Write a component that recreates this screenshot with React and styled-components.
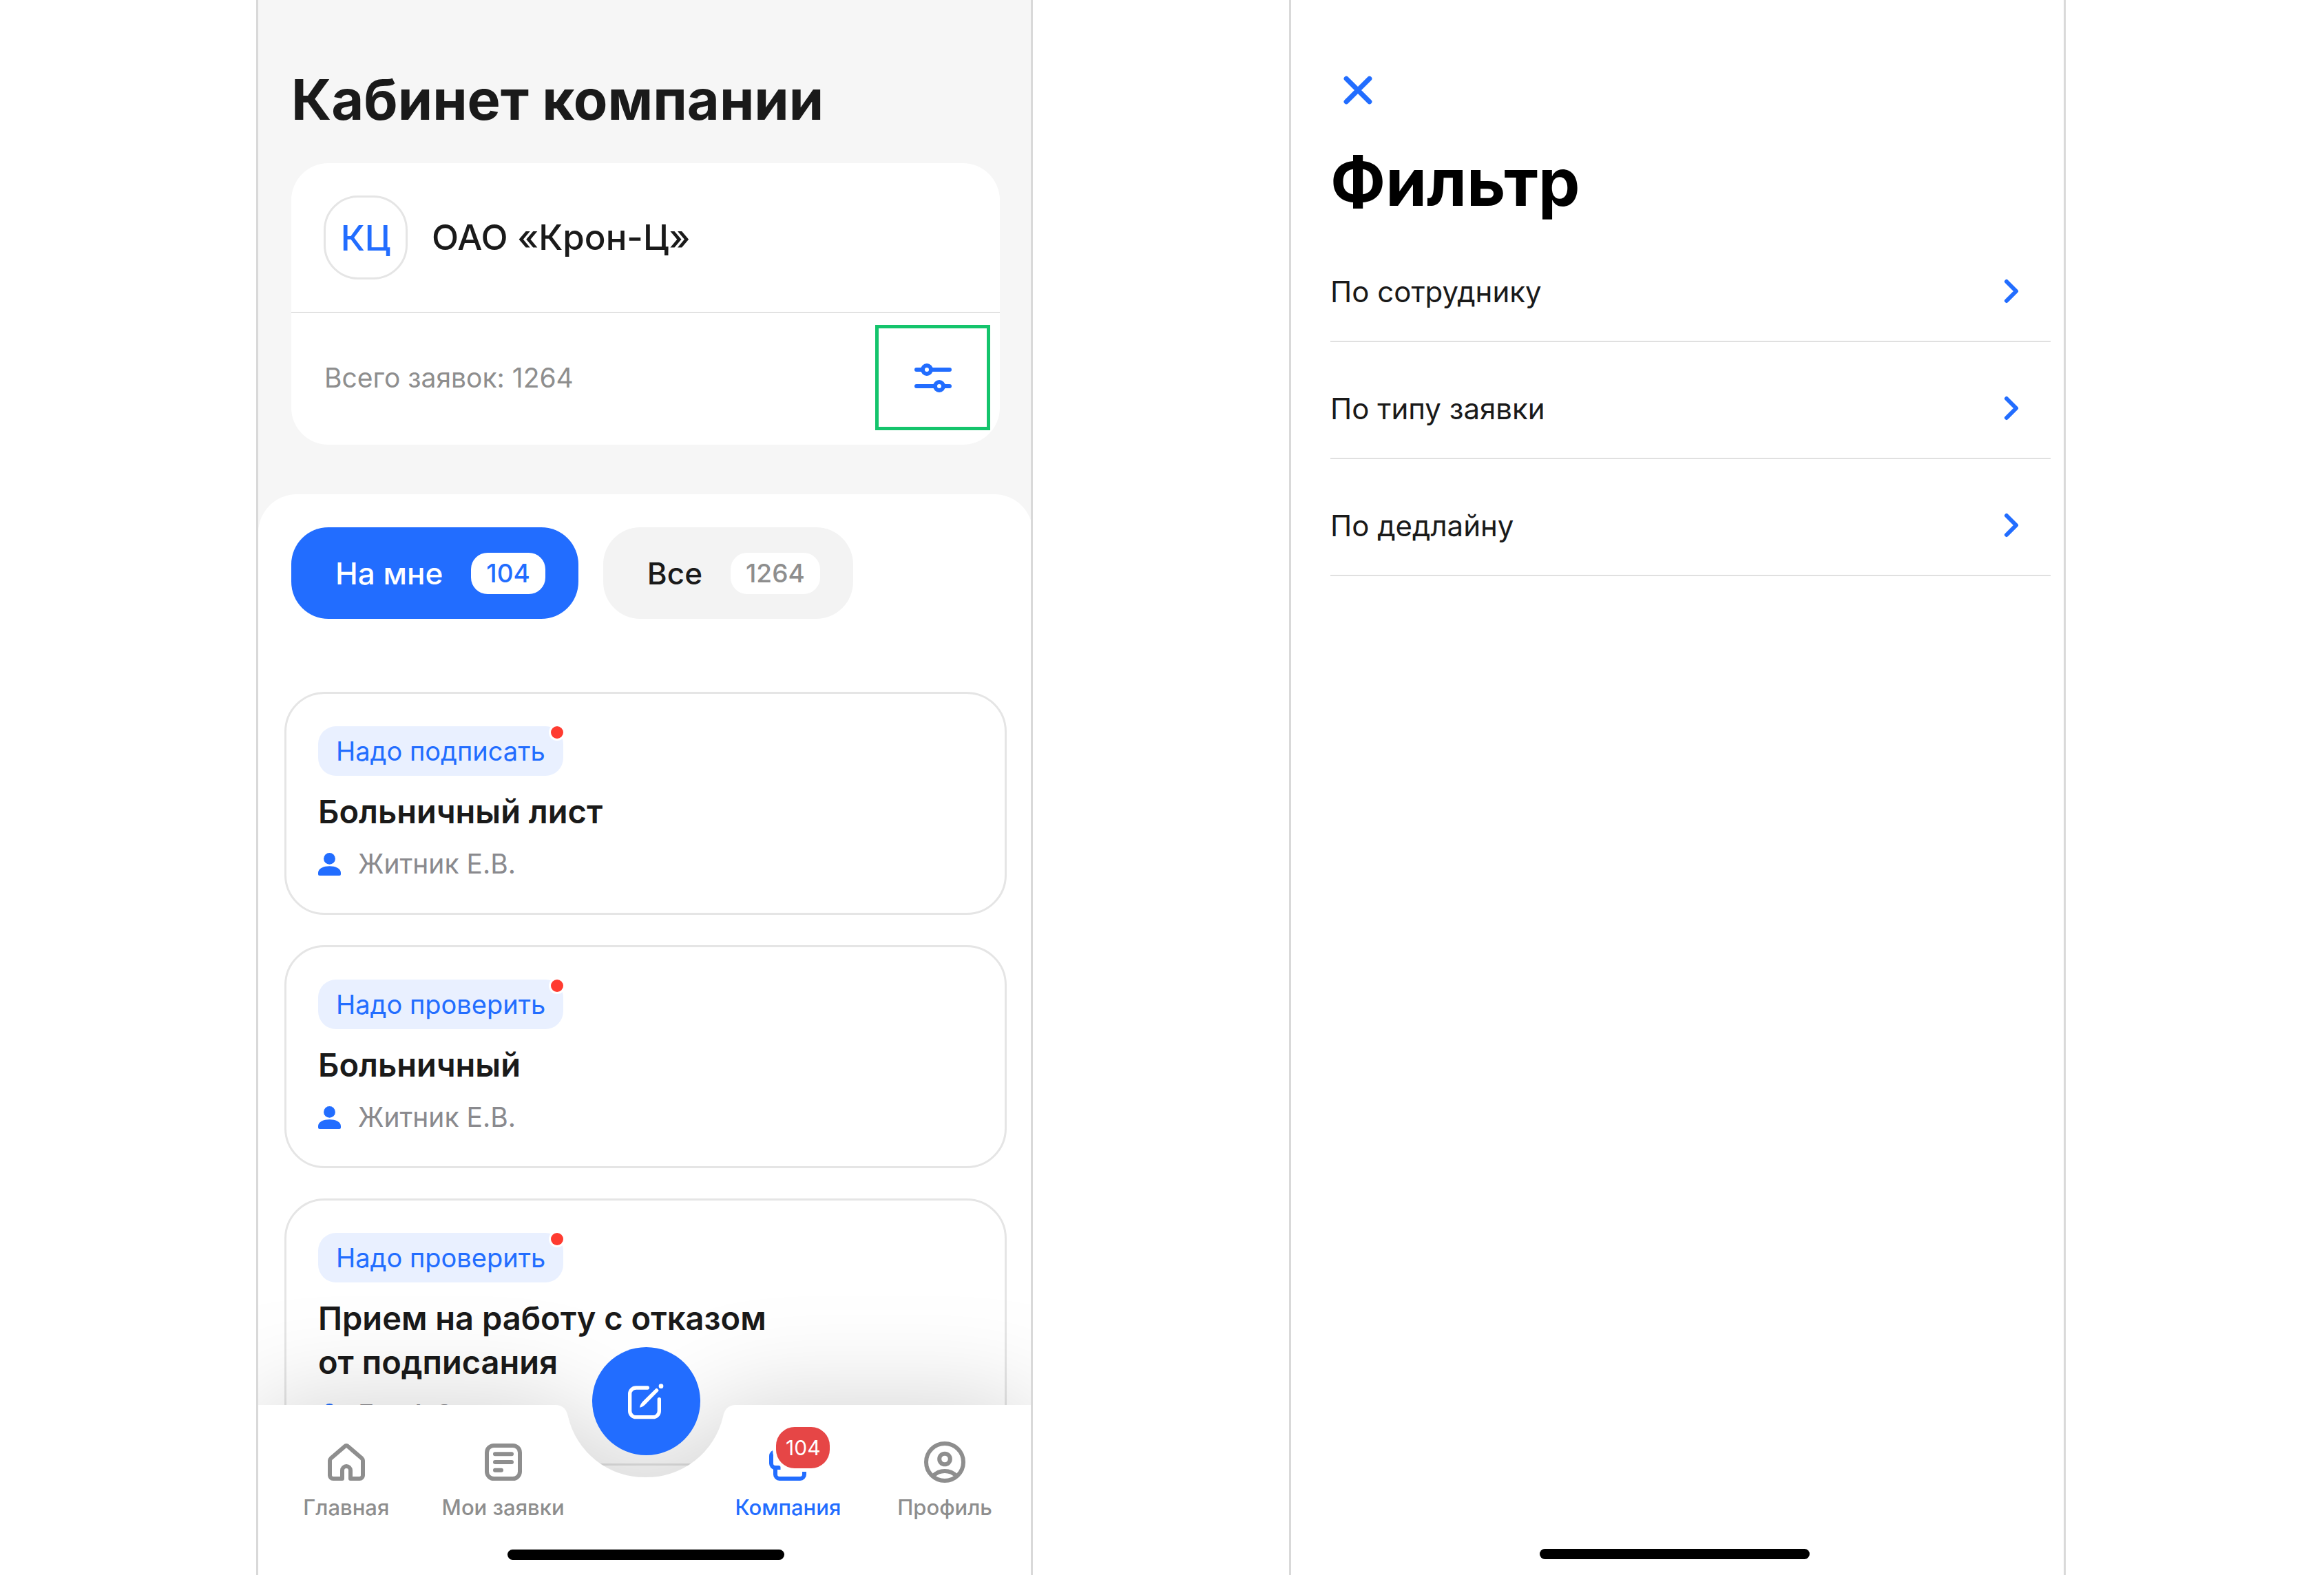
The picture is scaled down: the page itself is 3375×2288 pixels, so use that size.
import React from 'react';
import styled, { createGlobalStyle, css } from 'styled-components';

const color = {
  blue: '#226dff',
  ink: '#1a1a1a',
  gray: '#8e8e8e',
  line: '#e5e5e5',
  frame: '#d9d9d9',
  surface: '#f6f6f6',
};

const GlobalStyle = createGlobalStyle`
  *, *::before, *::after { box-sizing: border-box; }
  body {
    margin: 0;
    background: #fff;
    color: ${color.ink};
    font-family: Inter, "Liberation Sans", sans-serif;
  }
  h1, h2, h3, p, ul { margin: 0; padding: 0; }
  ul { list-style: none; }
  button { font: inherit; color: inherit; border: 0; padding: 0; background: none; cursor: pointer; }
  a { color: inherit; text-decoration: none; }
  svg { display: block; flex: none; }
`;

const Board = styled.main`
  display: flex;
  gap: 372px;
  height: 100vh;
  padding: 0 375px 0 372px;
`;

const Phone = styled.section`
  position: relative;
  flex: 1;
  min-width: 0;
  overflow: hidden;
  border-left: 3px solid ${color.frame};
  background: ${(p) => p.$background || '#fff'};

  &::after {
    content: '';
    position: absolute;
    inset: 0 0 0 auto;
    width: 3px;
    background: ${color.frame};
  }
`;

const CompanyHeader = styled.header`
  padding: 95px 48px 72px;
`;

const PageTitle = styled.h1`
  margin-bottom: 42px;
  font-size: 81px;
  line-height: 100px;
  font-weight: 700;
`;

const CompanyCard = styled.div`
  border-radius: 54px;
  background: #fff;
`;

const CompanyRow = styled.div`
  display: flex;
  align-items: center;
  gap: 35px;
  padding: 47px;
  border-bottom: 1px solid #c8c8c8;
`;

const Avatar = styled.div`
  display: grid;
  place-items: center;
  width: 122px;
  height: 122px;
  border: 3px solid ${color.line};
  border-radius: 50px;
  color: ${color.blue};
  font-size: 51px;
  font-weight: 500;
`;

const CompanyName = styled.h2`
  font-size: 51px;
  line-height: 64px;
  font-weight: 500;
`;

const TotalRow = styled.div`
  display: flex;
  align-items: center;
  justify-content: space-between;
  padding: 18px 14px 21px 48px;
  color: ${color.gray};
  font-size: 39px;
`;

const FilterButton = styled.button`
  display: grid;
  place-items: center;
  width: 167px;
  height: 153px;
  border: 5px solid #14c46c;
  color: ${color.blue};
`;

const Sheet = styled.div`
  padding: 48px 38px 160px;
  border-radius: 56px 56px 0 0;
  background: #fff;
`;

const Scopes = styled.div`
  display: flex;
  gap: 36px;
  margin: 0 10px 106px;
`;

const ScopeButton = styled.button`
  display: flex;
  align-items: center;
  gap: 41px;
  height: 133px;
  padding: 0 48px 0 64px;
  border-radius: 54px;
  font-size: 44px;
  font-weight: 500;
  background: #f3f3f3;
  ${(p) => p.$active && css`
    background: ${color.blue};
    color: #fff;
  `}
`;

const Count = styled.span`
  padding: 0 22px;
  border-radius: 24px;
  background: #fff;
  color: ${(p) => (p.$active ? color.blue : color.gray)};
  font-size: 37px;
  line-height: 60px;
`;

const RequestList = styled.ul`
  display: grid;
  gap: 44px;
`;

const RequestCard = styled.li`
  display: flex;
  flex-direction: column;
  align-items: flex-start;
  gap: 20px;
  padding: 47px 46px;
  border: 3px solid ${color.line};
  border-radius: 58px;
`;

const Tag = styled.span`
  position: relative;
  padding: 0 26px;
  border-radius: 26px;
  background: #e9f0ff;
  color: ${color.blue};
  font-size: 38px;
  line-height: 72px;

  &::after {
    content: '';
    position: absolute;
    top: 0;
    right: 0;
    width: 18px;
    height: 18px;
    border-radius: 50%;
    background: #ff3b30;
    box-shadow: 0 0 0 3px #fff;
  }
`;

const RequestTitle = styled.h3`
  font-size: 47px;
  line-height: 64px;
  font-weight: 600;
  white-space: pre-line;
`;

const Person = styled.p`
  display: flex;
  align-items: center;
  gap: 25px;
  color: #8a8a8e;
  font-size: 39px;
  line-height: 48px;

  svg { color: ${color.blue}; }
`;

const TabBar = styled.div`
  position: absolute;
  inset: auto 0 0;
`;

const BarSurface = styled.div`
  display: flex;
  height: 247px;
  filter: drop-shadow(0 0 76px rgba(0, 0, 0, 0.18));

  &::before, &::after {
    content: '';
    flex: 1;
    background: #fff;
  }
`;

const BarContent = styled.div`
  position: absolute;
  inset: 0;
  display: flex;
  flex-direction: column;
  align-items: center;
  padding: 47px 0 22px;
`;

const Nav = styled.nav`
  display: grid;
  grid-template-columns: 1fr 1fr 186px 1fr 1fr;
  width: 100%;
  padding: 0 14px;
  margin-bottom: auto;
`;

const NavItem = styled.a`
  display: flex;
  flex-direction: column;
  align-items: center;
  gap: 12px;
  color: ${(p) => (p.$active ? color.blue : color.gray)};
  font-size: 31px;
  line-height: 36px;
  font-weight: 500;
  white-space: nowrap;
`;

const NavIcon = styled.span`
  position: relative;
`;

const NavBadge = styled.span`
  position: absolute;
  top: -15px;
  left: 19px;
  width: 78px;
  border-radius: 27px;
  background: #e64646;
  box-shadow: 0 0 0 5px #fff;
  color: #fff;
  font-size: 30px;
  line-height: 60px;
  font-weight: 400;
  text-align: center;
`;

const CreateButton = styled.button`
  position: absolute;
  top: -84px;
  left: calc(50% - 78px);
  display: grid;
  place-items: center;
  width: 157px;
  height: 157px;
  border-radius: 50%;
  background: ${color.blue};
  color: #fff;
`;

const HomeIndicator = styled.div`
  width: ${(p) => p.$width}px;
  height: 15px;
  border-radius: 8px;
  background: #000;
`;

const FilterScreen = styled.div`
  display: flex;
  flex-direction: column;
  height: 100%;
  padding: 91px 22px 23px 57px;
`;

const CloseButton = styled.button`
  display: grid;
  place-items: center;
  width: 80px;
  height: 80px;
  color: ${color.blue};
`;

const FilterTitle = styled.h1`
  padding: 34px 0 3px;
  color: #000;
  font-size: 96px;
  line-height: 119px;
  font-weight: 700;
`;

const FilterRow = styled.button`
  display: flex;
  align-items: center;
  justify-content: space-between;
  width: 100%;
  height: 170px;
  padding: 24px 46px 0 0;
  border-bottom: 2px solid #e0e0e0;
  font-size: 42px;
  text-align: left;

  svg { color: ${color.blue}; }
`;

const IndicatorSlot = styled.div`
  display: flex;
  justify-content: center;
  margin: auto 46px 0 0;
`;

function LineIcon({ children, size = 72, weight = 2 }) {
  return (
    <svg
      width={size}
      height={size}
      viewBox="0 0 24 24"
      fill="none"
      stroke="currentColor"
      strokeWidth={weight}
      strokeLinecap="round"
      strokeLinejoin="round"
      aria-hidden="true"
    >
      {children}
    </svg>
  );
}

const SlidersIcon = () => (
  <LineIcon>
    <path d="M4 8h3M11 8h9M4 16h9M17 16h3" />
    <circle cx="9" cy="8" r="2" />
    <circle cx="15" cy="16" r="2" />
  </LineIcon>
);

const HomeIcon = () => (
  <LineIcon>
    <path d="M4 11.3V18.4A1.6 1.6 0 0 0 5.6 20H10V16a2 2 0 0 1 4 0v4h4.4a1.6 1.6 0 0 0 1.6-1.6V11.3a1.6 1.6 0 0 0-.5-1.1L12.7 4.3a1 1 0 0 0-1.4 0L4.5 10.2A1.6 1.6 0 0 0 4 11.3Z" />
  </LineIcon>
);

const DocumentIcon = () => (
  <LineIcon>
    <rect x="4" y="4" width="16" height="16" rx="3.4" />
    <path d="M8 8.1h8M8 12h8M8 15.9h3" />
  </LineIcon>
);

const CompanyIcon = () => (
  <LineIcon>
    <path d="M8 7H6a2 2 0 0 0-2 2v3.700a2 2 0 0 0 2 2h2.500" strokeLinecap="butt" />
    <path d="M6 14.700V18a2 2 0 0 0 2 2h10a2 2 0 0 0 2-2v-1.600" strokeLinecap="butt" />
  </LineIcon>
);

const ProfileIcon = () => (
  <LineIcon>
    <circle cx="12" cy="12" r="9" />
    <circle cx="12" cy="10.5" r="2.6" />
    <path d="M6.3 18.8a7.8 7.8 0 0 1 11.4 0" />
  </LineIcon>
);

const CloseIcon = () => (
  <LineIcon weight={2.4}>
    <path d="M6.4 6.4l11.2 11.2M17.6 6.4L6.4 17.6" />
  </LineIcon>
);

const ChevronIcon = () => (
  <svg width="22" height="36" viewBox="0 0 22 36" fill="none" stroke="currentColor" strokeWidth="6" strokeLinecap="round" strokeLinejoin="round" aria-hidden="true">
    <path d="M4 4l14 14L4 32" />
  </svg>
);

const PersonIcon = () => (
  <svg width="33" height="33" viewBox="0 0 33 33" fill="currentColor" aria-hidden="true">
    <circle cx="16.5" cy="8.4" r="8.4" />
    <path d="M0 29c0-6.5 8-9.7 16.5-9.7S33 22.5 33 29v2a2 2 0 0 1-2 2H2a2 2 0 0 1-2-2z" />
  </svg>
);

const ComposeIcon = () => (
  <svg width="54" height="54" viewBox="0 0 162 162" fill="none" aria-hidden="true">
    <path d="M88 21H38A27 27 0 0 0 11 48V122A27 27 0 0 0 38 149H112A27 27 0 0 0 139 122V71" stroke="currentColor" strokeWidth="16" strokeLinecap="round" />
    <path d="M54 107C56 94 62 86 68 80L124 25q4-3 7 0l4 4q3 4 0 7L80 92C72 100 66 104 54 107Z" fill="currentColor" />
    <circle cx="147" cy="14" r="10" fill="currentColor" />
  </svg>
);

const NotchShape = () => (
  <svg width="263" height="247" viewBox="0 0 263 247" fill="#fff" aria-hidden="true">
    <path d="M0 0C12 0 17 7 19 17A114 114 0 0 0 131 105A114 114 0 0 0 244 17C246 7 251 0 263 0V247H0Z" />
  </svg>
);

const requests = [
  { tag: 'Надо подписать', title: 'Больничный лист', person: 'Житник Е.В.' },
  { tag: 'Надо проверить', title: 'Больничный', person: 'Житник Е.В.' },
  { tag: 'Надо проверить', title: 'Прием на работу с отказом\nот подписания', person: 'Гук А.С.' },
];

const filters = ['По сотруднику', 'По типу заявки', 'По дедлайну'];

function CompanyScreen() {
  return (
    <Phone $background={color.surface}>
      <CompanyHeader>
        <PageTitle>Кабинет компании</PageTitle>
        <CompanyCard>
          <CompanyRow>
            <Avatar>КЦ</Avatar>
            <CompanyName>ОАО «Крон-Ц»</CompanyName>
          </CompanyRow>
          <TotalRow>
            <p>Всего заявок: 1264</p>
            <FilterButton type="button" aria-label="Фильтр"><SlidersIcon /></FilterButton>
          </TotalRow>
        </CompanyCard>
      </CompanyHeader>

      <Sheet>
        <Scopes>
          <ScopeButton type="button" $active>На мне<Count $active>104</Count></ScopeButton>
          <ScopeButton type="button">Все<Count>1264</Count></ScopeButton>
        </Scopes>
        <RequestList>
          {requests.map((r) => (
            <RequestCard key={r.title}>
              <Tag>{r.tag}</Tag>
              <RequestTitle>{r.title}</RequestTitle>
              <Person><PersonIcon />{r.person}</Person>
            </RequestCard>
          ))}
        </RequestList>
      </Sheet>

      <TabBar>
        <BarSurface><NotchShape /></BarSurface>
        <BarContent>
          <Nav>
            <NavItem href="#home"><HomeIcon />Главная</NavItem>
            <NavItem href="#requests"><DocumentIcon />Мои заявки</NavItem>
            <span />
            <NavItem href="#company" $active>
              <NavIcon><CompanyIcon /><NavBadge>104</NavBadge></NavIcon>
              Компания
            </NavItem>
            <NavItem href="#profile"><ProfileIcon />Профиль</NavItem>
          </Nav>
          <HomeIndicator $width={402} />
          <CreateButton type="button" aria-label="Создать заявку"><ComposeIcon /></CreateButton>
        </BarContent>
      </TabBar>
    </Phone>
  );
}

function FiltersScreen() {
  return (
    <Phone>
      <FilterScreen>
        <CloseButton type="button" aria-label="Закрыть"><CloseIcon /></CloseButton>
        <FilterTitle>Фильтр</FilterTitle>
        <ul>
          {filters.map((f) => (
            <li key={f}><FilterRow type="button">{f}<ChevronIcon /></FilterRow></li>
          ))}
        </ul>
        <IndicatorSlot><HomeIndicator $width={392} /></IndicatorSlot>
      </FilterScreen>
    </Phone>
  );
}

export default function App() {
  return (
    <>
      <GlobalStyle />
      <Board>
        <CompanyScreen />
        <FiltersScreen />
      </Board>
    </>
  );
}
